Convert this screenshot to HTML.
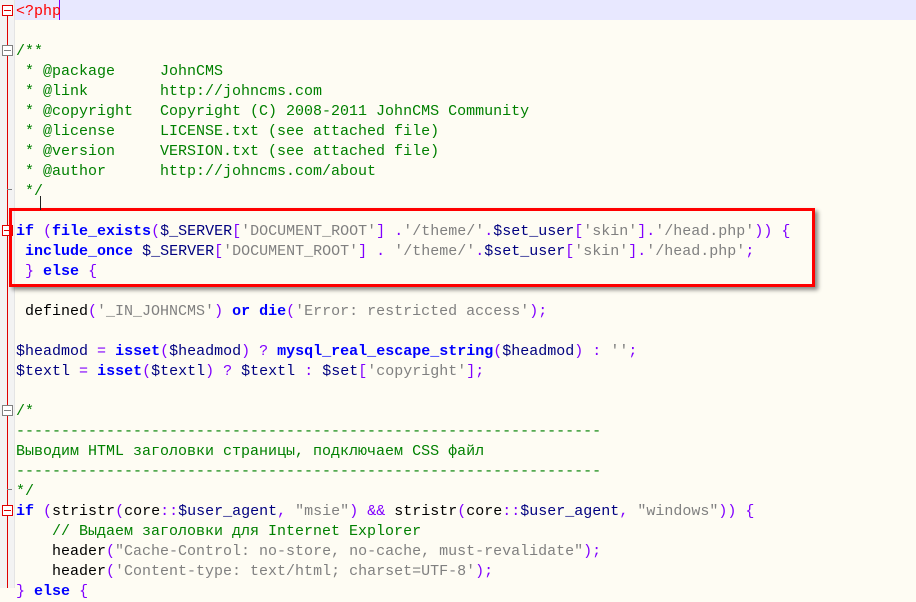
<!DOCTYPE html>
<html><head><meta charset="utf-8"><style>
html,body{margin:0;padding:0}
body{width:916px;height:588px;overflow:hidden;background:#fefcf3;position:relative;font-family:"Liberation Mono",monospace;font-size:15px}
.g{position:absolute;left:0;top:0;width:14px;height:588px;background:#f3f3f3;border-right:1px solid #e4e4e4}
.rl{position:absolute;left:7px;width:1px;background:#e00000}
.fb{position:absolute;left:2px;width:11px;height:11px;border:1px solid #e00000;background:#fff;box-sizing:border-box}
.fb:after{content:"";position:absolute;left:1px;top:4px;width:7px;height:1px;background:#e00000}
.fb.gr{border-color:#808080}.fb.gr:after{background:#808080}
.tk{position:absolute;left:7px;width:5px;height:1px;background:#808080}
.l{position:absolute;left:16px;height:20px;line-height:20px;padding-top:2px;white-space:pre;color:#000}
.c{color:#008000}.k{color:#0000ff;font-weight:bold}.s{color:#808080}.o{color:#8000ff}.v{color:#000080}.r{color:#ff0000}
.hl{position:absolute;left:15px;top:0;width:901px;height:20px;background:#e8e8ff}
.box{position:absolute;left:9px;top:208px;width:800px;height:73px;border:3px solid #f00;box-shadow:3px 3px 4px rgba(0,0,0,.45)}
</style></head><body>
<div class="hl"></div>
<div style="position:absolute;left:59px;top:0;width:1px;height:20px;background:#8000ff"></div>
<div class="g"></div>
<div class="rl" style="top:10px;height:578px"></div>
<div class="fb" style="top:5px"></div>
<div class="fb gr" style="top:45px"></div>
<div class="tk" style="top:189px"></div>
<div class="fb" style="top:225px"></div>
<div class="fb gr" style="top:405px"></div>
<div class="tk" style="top:489px"></div>
<div class="fb" style="top:505px"></div>

<div class="l r" style="top:0">&lt;?php</div>
<div class="l c" style="top:40px">/**</div>
<div class="l c" style="top:60px"> * @package     JohnCMS</div>
<div class="l c" style="top:80px"> * @link        http://johncms.com</div>
<div class="l c" style="top:100px"> * @copyright   Copyright (C) 2008-2011 JohnCMS Community</div>
<div class="l c" style="top:120px"> * @license     LICENSE.txt (see attached file)</div>
<div class="l c" style="top:140px"> * @version     VERSION.txt (see attached file)</div>
<div class="l c" style="top:160px"> * @author      http://johncms.com/about</div>
<div class="l c" style="top:180px"> */</div>
<div class="l" style="top:220px"><span class="k">if</span> <span class="o">(</span><span class="k">file_exists</span><span class="o">(</span><span class="v">$_SERVER</span><span class="o">[</span><span class="s">'DOCUMENT_ROOT'</span><span class="o">]</span> <span class="o">.</span><span class="s">'/theme/'</span><span class="o">.</span><span class="v">$set_user</span><span class="o">[</span><span class="s">'skin'</span><span class="o">].</span><span class="s">'/head.php'</span><span class="o">)) {</span></div>
<div class="l" style="top:240px"> <span class="k">include_once</span> <span class="v">$_SERVER</span><span class="o">[</span><span class="s">'DOCUMENT_ROOT'</span><span class="o">]</span> <span class="o">.</span> <span class="s">'/theme/'</span><span class="o">.</span><span class="v">$set_user</span><span class="o">[</span><span class="s">'skin'</span><span class="o">].</span><span class="s">'/head.php'</span><span class="o">;</span></div>
<div class="l" style="top:260px"> <span class="o">}</span> <span class="k">else</span> <span class="o">{</span></div>
<div class="l" style="top:300px"> defined<span class="o">(</span><span class="s">'_IN_JOHNCMS'</span><span class="o">)</span> <span class="k">or</span> <span class="k">die</span><span class="o">(</span><span class="s">'Error: restricted access'</span><span class="o">);</span></div>
<div class="l" style="top:340px"><span class="v">$headmod</span> <span class="o">=</span> <span class="k">isset</span><span class="o">(</span><span class="v">$headmod</span><span class="o">)</span> <span class="o">?</span> <span class="k">mysql_real_escape_string</span><span class="o">(</span><span class="v">$headmod</span><span class="o">)</span> <span class="o">:</span> <span class="s">''</span><span class="o">;</span></div>
<div class="l" style="top:360px"><span class="v">$textl</span> <span class="o">=</span> <span class="k">isset</span><span class="o">(</span><span class="v">$textl</span><span class="o">)</span> <span class="o">?</span> <span class="v">$textl</span> <span class="o">:</span> <span class="v">$set</span><span class="o">[</span><span class="s">'copyright'</span><span class="o">];</span></div>
<div class="l c" style="top:400px">/*</div>
<div class="l c" style="top:420px">-----------------------------------------------------------------</div>
<div class="l c" style="top:440px">Выводим HTML заголовки страницы, подключаем CSS файл</div>
<div class="l c" style="top:460px">-----------------------------------------------------------------</div>
<div class="l c" style="top:480px">*/</div>
<div class="l" style="top:500px"><span class="k">if</span> <span class="o">(</span>stristr<span class="o">(</span>core<span class="o">::</span><span class="v">$user_agent</span><span class="o">,</span> <span class="s">"msie"</span><span class="o">)</span> <span class="o">&amp;&amp;</span> stristr<span class="o">(</span>core<span class="o">::</span><span class="v">$user_agent</span><span class="o">,</span> <span class="s">"windows"</span><span class="o">)) {</span></div>
<div class="l c" style="top:520px">    // Выдаем заголовки для Internet Explorer</div>
<div class="l" style="top:540px">    header<span class="o">(</span><span class="s">"Cache-Control: no-store, no-cache, must-revalidate"</span><span class="o">);</span></div>
<div class="l" style="top:560px">    header<span class="o">(</span><span class="s">'Content-type: text/html; charset=UTF-8'</span><span class="o">);</span></div>
<div class="l" style="top:580px"><span class="o">}</span> <span class="k">else</span> <span class="o">{</span></div>
<div class="box"></div>
<div style="position:absolute;left:40px;top:196px;width:1px;height:14px;background:#222"></div>
</body></html>
